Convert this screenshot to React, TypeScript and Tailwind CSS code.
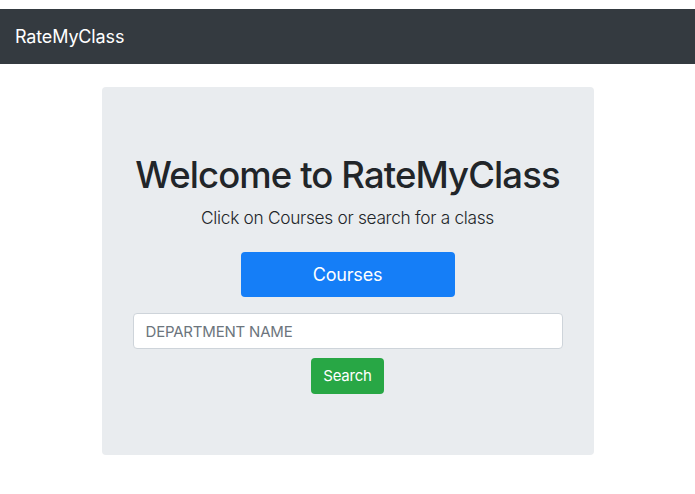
import React from "react";

export default function App() {
  return (
    <div
      className="min-h-screen bg-white pt-[9px] text-[#212529]"
      style={{ fontFamily: 'Inter, "Liberation Sans", Arial, sans-serif' }}
    >
      {/* Navbar */}
      <nav className="h-[55px] bg-[#343a40] flex items-center px-[15px]">
        <span className="text-white text-[18px] tracking-[-0.15px] leading-none">RateMyClass</span>
      </nav>

      {/* Jumbotron */}
      <main className="pt-[23px] flex justify-center">
        <div className="w-[492px] h-[368px] bg-[#e9ecef] rounded-[4px] flex flex-col items-center pt-[66px]">
          <h1 className="text-[36.5px] leading-[44px] tracking-[-0.9px] font-medium text-[#212529]">
            Welcome to RateMyClass
          </h1>
          <p className="mt-[9px] text-[17.3px] leading-[24px] tracking-[-0.3px] font-light text-[#212529]">
            Click on Courses or search for a class
          </p>
          <button className="mt-[22px] w-[214px] h-[45px] rounded-[4px] bg-[#157ef7] text-white text-[18px] tracking-[-0.2px]">
            Courses
          </button>
          <input
            type="text"
            placeholder="DEPARTMENT NAME"
            className="mt-[16px] w-[430px] h-[36px] bg-white border border-[#ced4da] rounded-[4px] px-[12px] text-[15px] tracking-[-0.2px] text-[#495057] placeholder:text-[#6c757d] outline-none"
          />
          <button className="mt-[9px] w-[73px] h-[36px] rounded-[4px] bg-[#28a745] text-white text-[15px] tracking-[-0.2px]">
            Search
          </button>
        </div>
      </main>
    </div>
  );
}
